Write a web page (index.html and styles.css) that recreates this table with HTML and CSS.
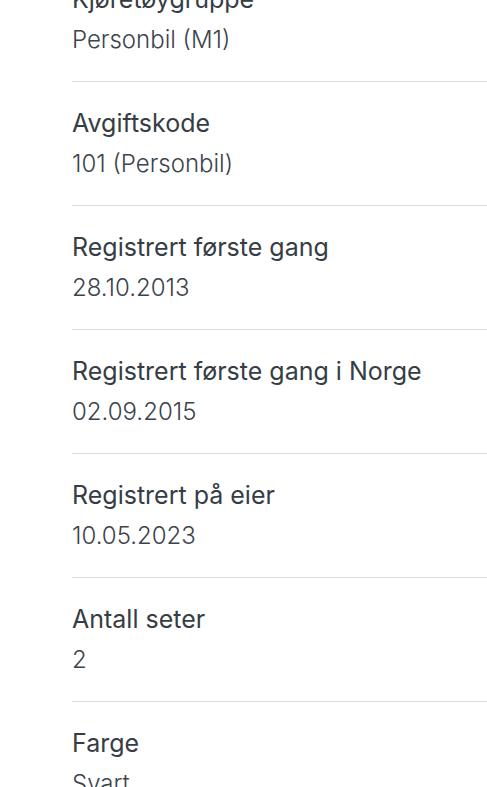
FILE: index.html
```html
<!DOCTYPE html>
<html lang="no">
<head>
<meta charset="utf-8">
<link rel="stylesheet" href="styles.css">
</head>
<body>
<dl class="facts">
  <div class="fact"><dt>Kjøretøygruppe</dt><dd>Personbil (M1)</dd></div>
  <div class="fact"><dt>Avgiftskode</dt><dd>101 (Personbil)</dd></div>
  <div class="fact"><dt>Registrert første gang</dt><dd>28.10.2013</dd></div>
  <div class="fact"><dt>Registrert første gang i Norge</dt><dd>02.09.2015</dd></div>
  <div class="fact"><dt>Registrert på eier</dt><dd>10.05.2023</dd></div>
  <div class="fact"><dt>Antall seter</dt><dd>2</dd></div>
  <div class="fact"><dt>Farge</dt><dd>Svart</dd></div>
</dl>
</body>
</html>
```
FILE: styles.css
```css
html, body {
  margin: 0;
  padding: 0;
  background: #ffffff;
  overflow: hidden;
}
body {
  font-family: Inter, Lato, sans-serif;
  color: #3b4248;
}
.facts {
  margin: -42px 0 0 72px;
  padding: 0;
}
.fact {
  padding: 21px 0 22px;
  border-bottom: 1px solid #dcdcdc;
}
.fact dt {
  font-size: 25px;
  line-height: 41px;
  font-weight: 400;
  color: #363d44;
}
.fact dd {
  margin: 0;
  font-size: 24px;
  line-height: 39px;
  font-weight: 300;
  color: #3b434b;
}
```
